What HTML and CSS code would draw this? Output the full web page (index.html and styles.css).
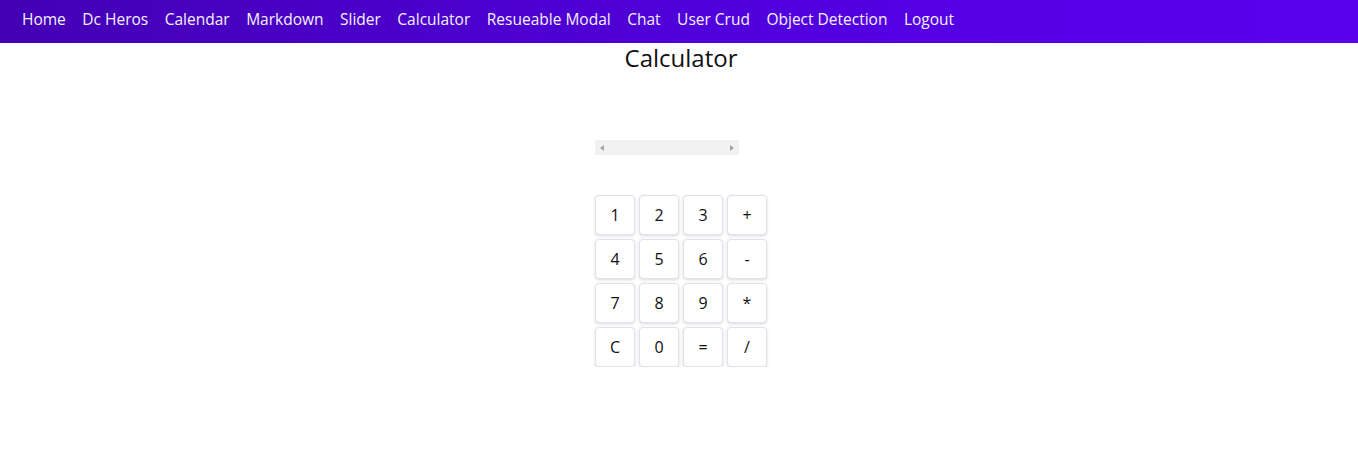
FILE: index.html
```html
<!DOCTYPE html>
<html>
<head>
<meta charset="utf-8">
<link rel="stylesheet" href="styles.css">
</head>
<body>
<nav class="navbar">
  <a class="nav-link">Home</a>
  <a class="nav-link">Dc Heros</a>
  <a class="nav-link">Calendar</a>
  <a class="nav-link">Markdown</a>
  <a class="nav-link">Slider</a>
  <a class="nav-link">Calculator</a>
  <a class="nav-link">Resueable Modal</a>
  <a class="nav-link">Chat</a>
  <a class="nav-link">User Crud</a>
  <a class="nav-link">Object Detection</a>
  <a class="nav-link">Logout</a>
</nav>
<main class="page">
  <h2 class="title">Calculator</h2>
  <div class="calc">
    <div class="display">
      <span class="arrow arrow-left"></span>
      <span class="arrow arrow-right"></span>
    </div>
    <div class="keys">
      <button class="key">1</button>
      <button class="key">2</button>
      <button class="key">3</button>
      <button class="key">+</button>
      <button class="key">4</button>
      <button class="key">5</button>
      <button class="key">6</button>
      <button class="key">-</button>
      <button class="key">7</button>
      <button class="key">8</button>
      <button class="key">9</button>
      <button class="key">*</button>
      <button class="key">C</button>
      <button class="key">0</button>
      <button class="key">=</button>
      <button class="key">/</button>
    </div>
  </div>
</main>
</body>
</html>
```

FILE: styles.css
```css
* { box-sizing: border-box; }
body {
  margin: 0;
  font-family: "Open Sans", "Noto Sans", sans-serif;
  background: #fff;
  color: #111;
}
.navbar {
  height: 43px;
  display: flex;
  align-items: center;
  gap: 16.5px;
  padding-left: 22px;
  padding-bottom: 5px;
  background: linear-gradient(90deg, #4400b4 0%, #5200e0 60%, #5b00ee 100%);
}
.nav-link {
  color: #f4f2ff;
  font-size: 15.5px;
  line-height: 20px;
}
.page {
  display: flex;
  flex-direction: column;
  align-items: center;
  padding-left: 4px;
}
.title {
  margin: 0;
  font-size: 24px;
  font-weight: 400;
  line-height: 30px;
  color: #111;
}
.calc {
  width: 172px;
  margin-top: 67px;
  display: flex;
  flex-direction: column;
  gap: 40px;
}
.display {
  width: 144px;
  height: 15px;
  background: #f1f1f1;
  display: flex;
  align-items: center;
  justify-content: space-between;
  padding: 0 5px;
}
.arrow {
  width: 0;
  height: 0;
  border-top: 3.5px solid transparent;
  border-bottom: 3.5px solid transparent;
}
.arrow-left { border-right: 4px solid #a3a3a3; }
.arrow-right { border-left: 4px solid #a3a3a3; }
.keys {
  display: grid;
  grid-template-columns: repeat(4, 40px);
  grid-auto-rows: 40px;
  gap: 4px;
}
.key {
  background: #fff;
  border: 1px solid #e2e2ea;
  border-radius: 4px;
  box-shadow: 0 1px 3px rgba(0, 0, 0, 0.15);
  font-family: "Open Sans", "Noto Sans", sans-serif;
  font-size: 16px;
  color: #111;
  padding: 0;
}
```
